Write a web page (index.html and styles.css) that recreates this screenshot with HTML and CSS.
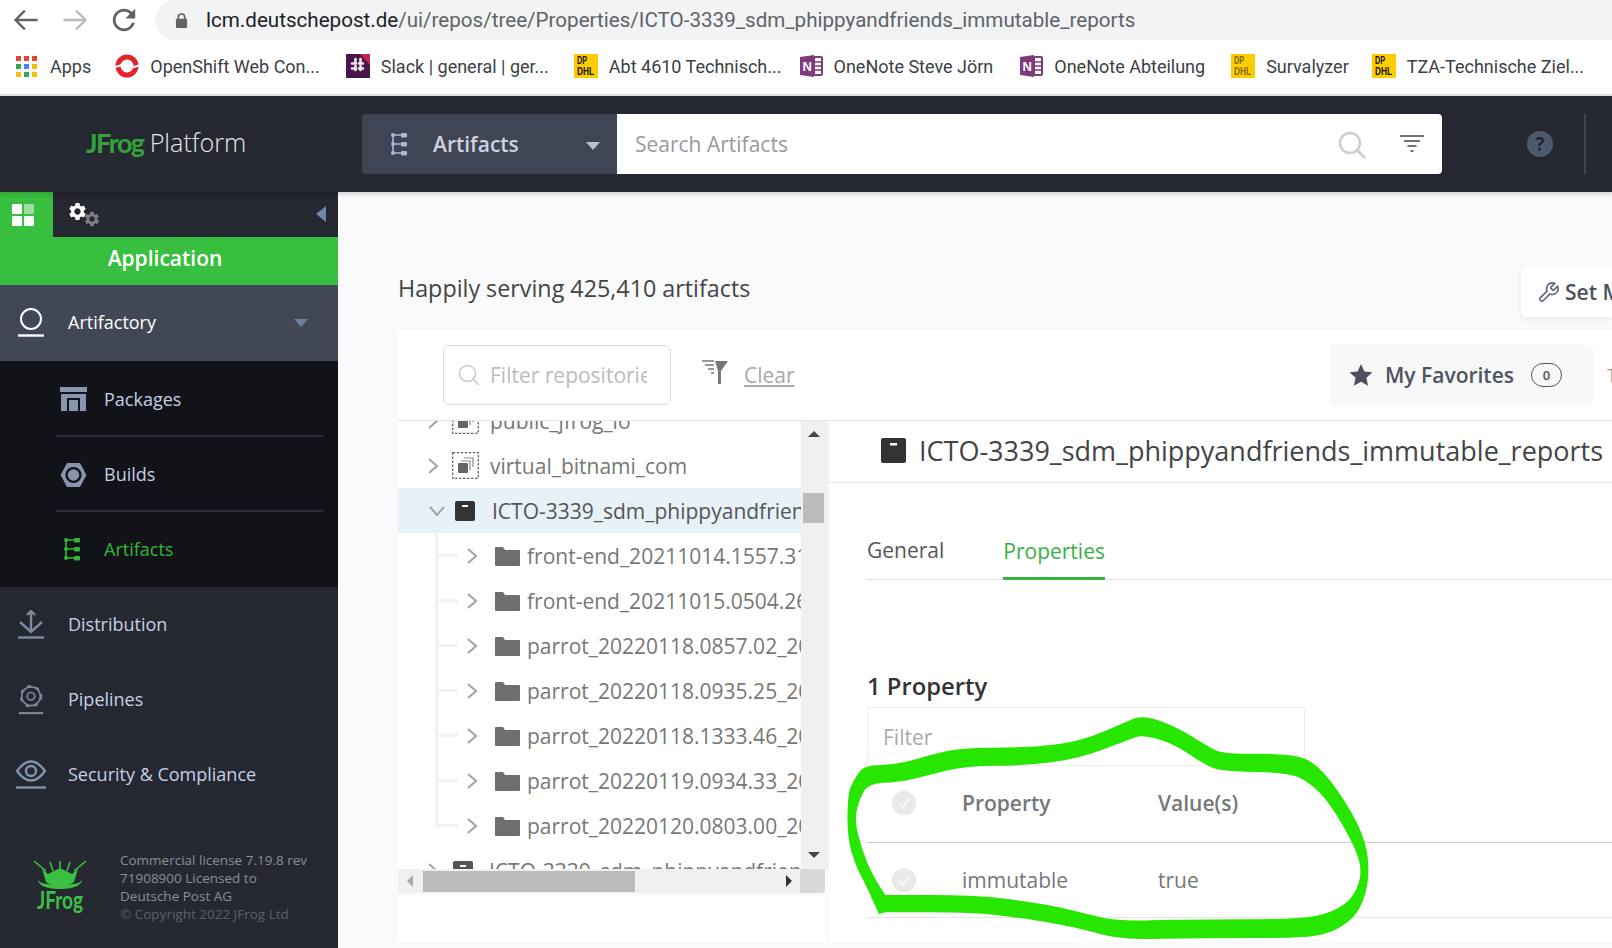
FILE: index.html
```html
<!DOCTYPE html>
<html lang="en">
<head>
<meta charset="utf-8">
<title>JFrog Platform</title>
<link rel="stylesheet" href="styles.css">
</head>
<body>
<svg class="sprite" aria-hidden="true">
  <symbol id="gear" viewBox="0 0 24 24"><path d="M19.14 12.94c.04-.3.06-.61.06-.94 0-.32-.02-.64-.07-.94l2.03-1.58a.49.49 0 0 0 .12-.61l-1.92-3.32a.488.488 0 0 0-.59-.22l-2.39.96c-.5-.38-1.03-.7-1.62-.94l-.36-2.54a.484.484 0 0 0-.48-.41h-3.84c-.24 0-.43.17-.47.41l-.36 2.54c-.59.24-1.13.57-1.62.94l-2.39-.96c-.22-.08-.47 0-.59.22L2.74 8.87c-.12.21-.08.47.12.61l2.03 1.58c-.05.3-.09.63-.09.94s.02.64.07.94l-2.03 1.58a.49.49 0 0 0-.12.61l1.92 3.32c.12.22.37.29.59.22l2.39-.96c.5.38 1.03.7 1.62.94l.36 2.54c.05.24.24.41.48.41h3.84c.24 0 .44-.17.47-.41l.36-2.54c.59-.24 1.13-.56 1.62-.94l2.39.96c.22.08.47 0 .59-.22l1.92-3.32c.12-.22.07-.47-.12-.61l-2.01-1.58zM12 15.6c-1.98 0-3.6-1.62-3.6-3.6s1.62-3.6 3.6-3.6 3.6 1.62 3.6 3.6-1.62 3.6-3.6 3.6z"/></symbol>
  <symbol id="folder" viewBox="0 0 25 20"><path d="M0 2a1 1 0 0 1 1-1h7l2 3h14a1 1 0 0 1 1 1v14a1 1 0 0 1-1 1H1a1 1 0 0 1-1-1z"/></symbol>
  <symbol id="chev" viewBox="0 0 12 18"><path d="M2 2l8 7-8 7" fill="none" stroke="#a3a3a3" stroke-width="2"/></symbol>
  <symbol id="tree" viewBox="0 0 18 24"><g fill="currentColor"><rect x="11" y="1" width="6" height="4.5" rx="1"/><rect x="11" y="10" width="6" height="4.5" rx="1"/><rect x="11" y="19" width="6" height="4.5" rx="1"/><circle cx="3" cy="3" r="2"/><circle cx="3" cy="12" r="2"/><circle cx="3" cy="21" r="2"/></g><path d="M3 3v18M3 3h8M3 12h8M3 21h8" stroke="currentColor" stroke-width="1.6" fill="none"/></symbol>
  <symbol id="check" viewBox="0 0 24 24"><circle cx="12" cy="12" r="12" fill="#e9e9e9"/><path d="M7 12.5l3.6 4L17 8" fill="none" stroke="#fff" stroke-width="1.3"/></symbol>
</svg>

<div class="page">
  <div class="browser-bar">
    <div class="nav-icons">
      <svg class="nav-icon" viewBox="0 0 24 24"><path d="M22 12H3M11 4l-8 8 8 8" fill="none" stroke="#5f6368" stroke-width="2"/></svg>
      <svg class="nav-icon" viewBox="0 0 24 24"><path d="M2 12h19M13 4l8 8-8 8" fill="none" stroke="#b9bbbe" stroke-width="2"/></svg>
      <svg class="nav-icon" viewBox="2 2 20 20"><path fill="#5f6368" d="M17.65 6.35A7.958 7.958 0 0 0 12 4c-4.42 0-7.99 3.58-7.99 8s3.57 8 7.99 8c3.73 0 6.84-2.55 7.73-6h-2.08A5.99 5.99 0 0 1 12 18c-3.31 0-6-2.69-6-6s2.69-6 6-6c1.66 0 3.14.69 4.22 1.78L13 11h7V4l-2.35 2.35z"/></svg>
    </div>
    <div class="omnibox">
      <svg class="lock" viewBox="0 0 14 18"><path d="M3.5 8V5.5a3.5 3.5 0 0 1 7 0V8" fill="none" stroke="#5f6368" stroke-width="1.8"/><rect x="1" y="7" width="12" height="10" rx="1.2" fill="#5f6368"/></svg>
      <span class="url"><span class="url-host">lcm.deutschepost.de</span>/ui/repos/tree/Properties/ICTO-3339_sdm_phippyandfriends_immutable_reports</span>
    </div>
  </div>

  <div class="bookmarks">
    <div class="bm bm-apps">
      <svg class="bm-icon" viewBox="0 0 21 21"><g>
        <rect class="g-r" x="0" y="0" width="5" height="5"/><rect class="g-r" x="8" y="0" width="5" height="5"/><rect class="g-r" x="16" y="0" width="5" height="5"/>
        <rect class="g-g" x="0" y="8" width="5" height="5"/><rect class="g-b" x="8" y="8" width="5" height="5"/><rect class="g-y" x="16" y="8" width="5" height="5"/>
        <rect class="g-y" x="0" y="16" width="5" height="5"/><rect class="g-g" x="8" y="16" width="5" height="5"/><rect class="g-y" x="16" y="16" width="5" height="5"/></g></svg>
      <span>Apps</span>
    </div>
    <div class="bm bm-openshift">
      <svg class="bm-icon" viewBox="0 0 24 24"><circle cx="12" cy="12" r="9" fill="none" stroke="#e3242b" stroke-width="5"/><path d="M0 13l12-3.500M12 15l12-3.500" stroke="#fff" stroke-width="2"/></svg>
      <span>OpenShift Web Con...</span>
    </div>
    <div class="bm bm-slack">
      <svg class="bm-icon" viewBox="0 0 24 24"><rect width="24" height="24" fill="#4a154b"/><path d="M14 0h10v11z" fill="#c7254e"/><path d="M6 9.5h12M6 14.5h12M9.5 5v14M14.5 5v14" stroke="#efe8ef" stroke-width="2.6" stroke-linecap="round" stroke-dasharray="4 3"/></svg>
      <span>Slack | general | ger...</span>
    </div>
    <div class="bm bm-abt">
      <svg class="bm-icon" viewBox="0 0 24 24"><rect width="24" height="24" fill="#fc0"/><text class="dhl-text" x="3" y="10" textLength="10" lengthAdjust="spacingAndGlyphs">DP</text><text class="dhl-text" x="3" y="21" textLength="17" lengthAdjust="spacingAndGlyphs">DHL</text></svg>
      <span>Abt 4610 Technisch...</span>
    </div>
    <div class="bm">
      <svg class="bm-icon" viewBox="0 0 24 24"><path d="M1 3l14-2v22L1 21z" fill="#80397b"/><rect x="15" y="3" width="8" height="18" rx="1" fill="none" stroke="#80397b" stroke-width="2"/><path d="M15 8h8M15 12h8M15 16h8" stroke="#80397b" stroke-width="1.6"/><text class="one-text" x="3.5" y="16.5">N</text></svg>
      <span>OneNote Steve Jörn</span>
    </div>
    <div class="bm bm-one2">
      <svg class="bm-icon" viewBox="0 0 24 24"><path d="M1 3l14-2v22L1 21z" fill="#80397b"/><rect x="15" y="3" width="8" height="18" rx="1" fill="none" stroke="#80397b" stroke-width="2"/><path d="M15 8h8M15 12h8M15 16h8" stroke="#80397b" stroke-width="1.6"/><text class="one-text" x="3.5" y="16.5">N</text></svg>
      <span>OneNote Abteilung</span>
    </div>
    <div class="bm bm-surv">
      <svg class="bm-icon" viewBox="0 0 24 24"><rect width="24" height="24" fill="#fc0"/><text class="dhl-text dhl-pale" x="3" y="10" textLength="10" lengthAdjust="spacingAndGlyphs">DP</text><text class="dhl-text dhl-pale" x="3" y="21" textLength="17" lengthAdjust="spacingAndGlyphs">DHL</text></svg>
      <span>Survalyzer</span>
    </div>
    <div class="bm bm-tza">
      <svg class="bm-icon" viewBox="0 0 24 24"><rect width="24" height="24" fill="#fc0"/><text class="dhl-text" x="3" y="10" textLength="10" lengthAdjust="spacingAndGlyphs">DP</text><text class="dhl-text" x="3" y="21" textLength="17" lengthAdjust="spacingAndGlyphs">DHL</text></svg>
      <span>TZA-Technische Ziel...</span>
    </div>
  </div>

  <header class="app-header">
    <div class="brand"><span class="brand-jfrog">JFrog</span> <span class="brand-platform">Platform</span></div>
    <div class="search-group">
      <div class="scope">
        <svg class="scope-icon" viewBox="0 0 18 24"><use href="#tree"/></svg>
        <span class="scope-label">Artifacts</span>
        <span class="caret caret-scope"></span>
      </div>
      <div class="search-box">
        <span class="search-placeholder">Search Artifacts</span>
        <svg class="search-icon" viewBox="0 0 28 28"><circle cx="12" cy="12" r="10" fill="none" stroke="#cfcfcf" stroke-width="2.6"/><path d="M19 19l8 8" stroke="#cfcfcf" stroke-width="3"/></svg>
        <svg class="filter-icon" viewBox="0 0 24 18"><path d="M0 2h24M4 7h16M7.500 12h9M10.500 17h3" stroke="#444" stroke-width="1.700"/></svg>
      </div>
    </div>
    <div class="help">?</div>
    <div class="header-divider"></div>
  </header>

  <div class="app-body">
    <aside class="sidebar">
      <div class="side-tabs">
        <div class="side-tab-active">
          <svg class="grid-icon" viewBox="0 0 22 22"><rect width="10" height="10" rx="1" fill="#fff"/><rect x="12" width="10" height="10" rx="1" fill="#fff" opacity=".5"/><rect y="12" width="10" height="10" rx="1" fill="#fff"/><rect x="12" y="12" width="10" height="10" rx="1" fill="#fff"/></svg>
        </div>
        <div class="side-gears">
          <svg class="gear-a" viewBox="0 0 24 24" fill="#fff"><use href="#gear"/></svg>
          <svg class="gear-b" viewBox="0 0 24 24" fill="#7d7f85"><use href="#gear"/></svg>
        </div>
        <span class="collapse"></span>
      </div>
      <div class="side-app">Application</div>
      <div class="side-row side-row-open">
        <svg class="side-icon" viewBox="0 0 26 30"><circle cx="13" cy="11" r="10" fill="none" stroke="#fff" stroke-width="2"/><path d="M0 27.500h26" stroke="#fff" stroke-width="2.400"/></svg>
        <span class="side-label side-label-white">Artifactory</span>
        <span class="caret caret-side"></span>
      </div>
      <div class="side-sub">
        <div class="sub-row sub-row-a">
          <svg class="sub-icon" viewBox="0 0 27 24"><path d="M0 0h27v5H0z" fill="#8896ad"/><path d="M1 7h25v17h-6V11H7v13H1z" fill="#8896ad"/><path d="M9 13h9v11H9z" fill="#8896ad"/></svg>
          <span class="side-label">Packages</span>
        </div>
        <div class="sub-row">
          <svg class="sub-icon" viewBox="0 0 28 26"><path d="M7 0h14l7 13-7 13H7L0 13z" fill="#8896ad"/><circle cx="14" cy="13" r="7.500" fill="#8896ad" stroke="#111319" stroke-width="2.600"/></svg>
          <span class="side-label">Builds</span>
        </div>
        <div class="sub-row sub-row-last">
          <svg class="sub-icon sub-icon-tree" viewBox="0 0 18 24"><use href="#tree"/></svg>
          <span class="side-label side-label-green">Artifacts</span>
        </div>
      </div>
      <div class="side-row">
        <svg class="side-icon" viewBox="0 0 26 30"><path d="M13 1v21M9 5l4-4 4 4M2 12l11 10 11-10" fill="none" stroke="#7a8ba3" stroke-width="2.400"/><path d="M0 27.500h26" stroke="#7a8ba3" stroke-width="2.400"/></svg>
        <span class="side-label">Distribution</span>
      </div>
      <div class="side-row">
        <svg class="side-icon" viewBox="0 0 26 32"><circle cx="13" cy="12" r="10" fill="none" stroke="#7a8ba3" stroke-width="1.800"/><circle cx="13" cy="12" r="11" fill="none" stroke="#7a8ba3" stroke-width="2" stroke-dasharray="4 5.500"/><circle cx="13" cy="12" r="4" fill="none" stroke="#7a8ba3" stroke-width="1.800"/><path d="M0 30h26" stroke="#7a8ba3" stroke-width="2.200"/></svg>
        <span class="side-label">Pipelines</span>
      </div>
      <div class="side-row">
        <svg class="side-icon side-icon-wide" viewBox="0 0 30 32"><path d="M1 12C6 5 10 2.500 15 2.500S24 5 29 12c-5 7-9 9.500-14 9.500S6 19 1 12z" fill="none" stroke="#8193ad" stroke-width="2.400"/><circle cx="15" cy="12" r="5" fill="none" stroke="#8193ad" stroke-width="2.400"/><path d="M0 28.500h30" stroke="#8193ad" stroke-width="2.400"/></svg>
        <span class="side-label">Security &amp; Compliance</span>
      </div>
      <div class="side-footer">
        <svg class="frog-logo" viewBox="0 0 56 56">
          <path d="M2 1l12 10M18 2l3 9M28 1v9M38 2l-3 9M54 1L42 11" stroke="#3cc043" stroke-width="1.600"/>
          <path d="M10 9l6 5 6-3 6-3 6 3 6 3 6-5-4 13c-6 5-22 5-28 0z" fill="#3cc043"/>
          <path d="M6 17c-2 6 8 8 22 8s24-2 22-8c2 8-8 12-22 12S4 25 6 17z" fill="#3cc043"/>
          <text class="frog-text" x="5" y="49" textLength="46" lengthAdjust="spacingAndGlyphs">JFrog</text>
        </svg>
        <div class="license">
          <div>Commercial license 7.19.8 rev</div>
          <div>71908900 Licensed to</div>
          <div>Deutsche Post AG</div>
          <div class="license-copy">© Copyright 2022 JFrog Ltd</div>
        </div>
      </div>
    </aside>

    <main class="main">
      <div class="main-top">
        <div class="serving">Happily serving 425,410 artifacts</div>
        <div class="set-me-up">
          <svg class="wrench" viewBox="0 0 24 24"><path d="M14.700 6.300a1 1 0 0 0 0 1.400l1.600 1.600a1 1 0 0 0 1.400 0l3.770-3.770a6 6 0 0 1-7.940 7.940l-6.910 6.910a2.120 2.120 0 0 1-3-3l6.910-6.910a6 6 0 0 1 7.940-7.940l-3.760 3.760z" fill="none" stroke="#5b6577" stroke-width="1.700"/></svg>
          <span>Set Me Up</span>
        </div>
      </div>

      <section class="card">
        <div class="toolbar">
          <div class="repo-filter">
            <svg class="repo-search" viewBox="0 0 22 22"><circle cx="9.500" cy="9.500" r="8" fill="none" stroke="#c5c9cf" stroke-width="1.500"/><path d="M15 15l6 6" stroke="#c5c9cf" stroke-width="1.500"/></svg>
            <span class="repo-placeholder">Filter repositories</span>
          </div>
          <svg class="funnel" viewBox="0 0 26 24"><path d="M0 1h12M3 5h9M6 9h6M9 13h3" stroke="#777" stroke-width="1.300"/><path d="M13 1h13l-7 10v13h-3V11z" fill="#777"/></svg>
          <span class="clear">Clear</span>
          <div class="favorites">
            <svg class="star" viewBox="0 0 24 24"><path d="M12 1l3.400 7.400 8 .9-6 5.400 1.700 8L12 18.700 4.900 22.700l1.700-8-6-5.400 8-.9z" fill="#4c4f5e"/></svg>
            <span class="fav-label">My Favorites</span>
            <span class="fav-badge">0</span>
          </div>
          <span class="toolbar-next">T</span>
        </div>

        <div class="split">
          <div class="tree-col">
            <div class="tree-area">
              <div class="tree">
                <div class="t-row t-first">
                  <svg class="t-chev" viewBox="0 0 12 18"><use href="#chev"/></svg>
                  <svg class="t-virtual" viewBox="0 0 27 27"><rect x=".7" y=".7" width="25.600" height="25.600" fill="none" stroke="#666" stroke-width="1.300" stroke-dasharray="2.500 1.500"/><rect x="6" y="11" width="10" height="10" rx="1" fill="#666"/><path d="M9 9h9v9M12 6h9v9" fill="none" stroke="#888" stroke-width="1.200"/></svg>
                  <span class="t-name">public_jfrog_io</span>
                </div>
                <div class="t-row">
                  <svg class="t-chev" viewBox="0 0 12 18"><use href="#chev"/></svg>
                  <svg class="t-virtual" viewBox="0 0 27 27"><rect x=".7" y=".7" width="25.600" height="25.600" fill="none" stroke="#666" stroke-width="1.300" stroke-dasharray="2.500 1.500"/><rect x="6" y="11" width="10" height="10" rx="1" fill="#666"/><path d="M9 9h9v9M12 6h9v9" fill="none" stroke="#888" stroke-width="1.200"/></svg>
                  <span class="t-name">virtual_bitnami_com</span>
                </div>
                <div class="t-row t-selected">
                  <svg class="t-chev-down" viewBox="0 0 18 12"><path d="M2 2l7 8 7-8" fill="none" stroke="#a3a3a3" stroke-width="2"/></svg>
                  <svg class="t-repo" viewBox="0 0 20 20"><rect width="20" height="20" rx="2" fill="#333"/><rect x="7" y="4" width="6" height="2" fill="#fff"/></svg>
                  <span class="t-name">ICTO-3339_sdm_phippyandfriends_immutable_reports</span>
                </div>
                <div class="t-row t-child"><svg class="t-chev" viewBox="0 0 12 18"><use href="#chev"/></svg><svg class="t-folder" viewBox="0 0 25 20"><use href="#folder"/></svg><span class="t-name">front-end_20211014.1557.31_2021</span></div>
                <div class="t-row t-child"><svg class="t-chev" viewBox="0 0 12 18"><use href="#chev"/></svg><svg class="t-folder" viewBox="0 0 25 20"><use href="#folder"/></svg><span class="t-name">front-end_20211015.0504.26_2021</span></div>
                <div class="t-row t-child"><svg class="t-chev" viewBox="0 0 12 18"><use href="#chev"/></svg><svg class="t-folder" viewBox="0 0 25 20"><use href="#folder"/></svg><span class="t-name">parrot_20220118.0857.02_20220118</span></div>
                <div class="t-row t-child"><svg class="t-chev" viewBox="0 0 12 18"><use href="#chev"/></svg><svg class="t-folder" viewBox="0 0 25 20"><use href="#folder"/></svg><span class="t-name">parrot_20220118.0935.25_20220118</span></div>
                <div class="t-row t-child"><svg class="t-chev" viewBox="0 0 12 18"><use href="#chev"/></svg><svg class="t-folder" viewBox="0 0 25 20"><use href="#folder"/></svg><span class="t-name">parrot_20220118.1333.46_20220118</span></div>
                <div class="t-row t-child"><svg class="t-chev" viewBox="0 0 12 18"><use href="#chev"/></svg><svg class="t-folder" viewBox="0 0 25 20"><use href="#folder"/></svg><span class="t-name">parrot_20220119.0934.33_20220119</span></div>
                <div class="t-row t-child t-child-last"><svg class="t-chev" viewBox="0 0 12 18"><use href="#chev"/></svg><svg class="t-folder" viewBox="0 0 25 20"><use href="#folder"/></svg><span class="t-name">parrot_20220120.0803.00_20220120</span></div>
                <div class="t-row">
                  <svg class="t-chev" viewBox="0 0 12 18"><use href="#chev"/></svg>
                  <svg class="t-repo t-repo-next" viewBox="0 0 20 20"><rect width="20" height="20" rx="2" fill="#555"/><rect x="7" y="4" width="6" height="2" fill="#fff"/></svg>
                  <span class="t-name">ICTO-3339_sdm_phippyandfriends_immutable</span>
                </div>
              </div>
              <div class="v-scroll">
                <span class="arrow-up"></span>
                <span class="v-thumb"></span>
                <span class="arrow-down"></span>
              </div>
            </div>
            <div class="h-scroll">
              <span class="arrow-left"></span>
              <span class="h-thumb"></span>
              <span class="arrow-right"></span>
              <span class="h-corner"></span>
            </div>
            <div class="tree-foot"></div>
          </div>

          <div class="detail">
            <div class="detail-title">
              <svg class="detail-icon" viewBox="0 0 25 25"><rect width="25" height="25" rx="2" fill="#333"/><rect x="9" y="5" width="7" height="2.500" fill="#fff"/></svg>
              <span>ICTO-3339_sdm_phippyandfriends_immutable_reports</span>
            </div>
            <div class="detail-body">
              <div class="tabs">
                <span class="tab">General</span>
                <span class="tab tab-active">Properties</span>
              </div>
              <h2 class="prop-count">1 Property</h2>
              <div class="prop-filter">Filter</div>
              <div class="prop-row prop-head">
                <svg class="prop-check" viewBox="0 0 24 24"><use href="#check"/></svg>
                <span>Property</span>
                <span>Value(s)</span>
              </div>
              <div class="prop-row">
                <svg class="prop-check" viewBox="0 0 24 24"><use href="#check"/></svg>
                <span>immutable</span>
                <span>true</span>
              </div>
            </div>
          </div>
        </div>
      </section>
    </main>
  </div>

  <svg class="scribble" viewBox="0 0 1568 864" preserveAspectRatio="none" aria-hidden="true">
    <path fill="#27e600" fill-rule="evenodd" d="M137 762 L155 757 L278 757 Q400 757 480 767 Q560 778 620 789 Q680 800 740 817 Q800 840 900 837 Q1000 834 1170 834 Q1340 836 1380 823 Q1420 812 1452 784 Q1485 757 1500 697 Q1513 640 1504 580 Q1495 520 1457 452 Q1420 385 1385 342 Q1350 300 1315 291 Q1280 281 1190 281 Q1100 283 1080 271 Q1060 260 1010 227 Q960 195 917 180 Q875 166 850 176 Q830 185 765 215 Q700 245 625 254 Q550 263 460 263 Q370 263 325 274 Q280 285 235 299 Q190 313 145 315 Q95 315 82 336 Q66 360 58 380 Q50 400 49 465 Q48 530 60 575 Q73 620 88 650 Q103 680 137 762 Z M155 705 L278 705 Q400 705 480 715 Q560 725 620 737 Q680 750 740 767 Q800 785 900 781 Q1000 778 1170 778 Q1340 778 1385 761 Q1430 745 1451 722 Q1472 700 1481 667 Q1490 635 1480 597 Q1470 560 1435 495 Q1400 430 1370 397 Q1340 365 1310 351 Q1280 337 1190 336 Q1100 335 1075 325 Q1050 315 1005 282 Q960 250 917 237 Q875 225 857 231 Q840 238 770 266 Q700 295 625 306 Q550 317 465 317 Q380 317 330 331 Q280 345 235 356 Q190 367 150 368 Q110 370 97 390 Q85 410 76 445 Q68 480 79 525 Q90 570 105 610 Q120 650 155 705 Z"/>
  </svg>
</div>
</body>
</html>
```
FILE: styles.css
```css
* { box-sizing: border-box; }
html, body { margin: 0; padding: 0; }
body { font-family: "Open Sans", "Noto Sans", sans-serif; background: #fff; color: #333; }
.sprite { display: none; }
.page { position: relative; width: 1612px; height: 948px; overflow: hidden; display: flex; flex-direction: column; }

/* browser chrome */
.browser-bar { height: 40px; display: flex; background: #fff; flex: none; }
.nav-icons { width: 155px; display: flex; gap: 21px; padding-left: 12px; align-items: center; flex: none; }
.nav-icon { width: 28px; height: 28px; flex: none; }
.omnibox { flex: 1; background: #f1f3f4; border-radius: 20px 0 0 20px; display: flex; align-items: center; padding-left: 20px; }
.lock { width: 13px; height: 17px; flex: none; }
.url { margin-left: 18px; font-family: "Roboto", sans-serif; font-size: 20.6px; color: #5f6368; white-space: nowrap; }
.url-host { color: #202124; }
.bookmarks { height: 54px; flex: none; display: flex; align-items: center; gap: 17px; padding: 0 0 2px 16px; background: #fff; font-family: "Roboto", sans-serif; font-size: 18px; color: #3c4043; white-space: nowrap; }
.bm { display: flex; align-items: center; flex: none; }
.bm-icon { width: 24px; height: 24px; flex: none; margin-right: 11px; }
.bm-apps .bm-icon { width: 21px; height: 21px; margin-right: 13px; }
.bm-openshift { margin-left: 7px; }
.bm-slack { margin-left: 9px; }
.bm-abt { margin-left: 8px; }
.bm-one2 { margin-left: 9px; }
.bm-surv { margin-left: 9px; }
.bm-tza { margin-left: 6px; }
.g-r { fill: #ea4335; } .g-g { fill: #34a853; } .g-b { fill: #4285f4; } .g-y { fill: #fbbc05; }
.dhl-text { font-family: "Liberation Sans", sans-serif; font-weight: 700; font-size: 10.5px; fill: #111; }
.dhl-pale { fill: #7c6a10; }
.one-text { font-family: "Liberation Sans", sans-serif; font-weight: 700; font-size: 13px; fill: #fff; }

/* app header */
.app-header { height: 98px; flex: none; border-top: 2px solid #dfe1e4; background: #252830; display: flex; align-items: flex-start; padding-top: 18px; box-shadow: 0 2px 5px rgba(0,0,0,.18); position: relative; z-index: 2; }
.brand { width: 362px; flex: none; height: 60px; display: flex; align-items: center; padding-left: 86px; gap: 6px; margin-top: -2px; }
.brand-jfrog { font-family: "Lato", sans-serif; font-weight: 700; color: #36a23c; font-size: 27px; letter-spacing: -1.5px; }
.brand-platform { color: #e6e8ea; font-weight: 300; font-size: 25.2px; }
.search-group { width: 1080px; height: 60px; display: flex; flex: none; }
.scope { width: 255px; background: #3f4555; border-radius: 4px 0 0 4px; display: flex; align-items: center; padding-left: 28px; }
.scope-icon { width: 18px; height: 24px; color: #a5bbdc; flex: none; }
.scope-label { margin-left: 25px; font-size: 21px; font-weight: 600; color: #cbd3e0; }
.caret { display: inline-block; width: 0; height: 0; border-left: 7px solid transparent; border-right: 7px solid transparent; border-top: 8px solid #b4c2d8; }
.caret-scope { margin-left: 67px; margin-top: 4px; }
.search-box { flex: 1; background: #fff; border-radius: 0 4px 4px 0; display: flex; align-items: center; padding-left: 18px; }
.search-placeholder { flex: 1; font-size: 21px; color: #9a9a9a; }
.search-icon { width: 28px; height: 28px; flex: none; margin-top: 2px; }
.filter-icon { width: 24px; height: 18px; flex: none; margin: -3px 18px 0 34px; }
.help { width: 26px; height: 26px; border-radius: 50%; background: #4d5a6e; color: #252830; font-weight: 700; font-size: 19px; line-height: 26px; text-align: center; margin: 17px 0 0 85px; flex: none; }
.header-divider { width: 2px; height: 60px; background: #3f4555; margin-left: 31px; flex: none; }

/* layout */
.app-body { flex: 1; display: flex; min-height: 0; }
.sidebar { width: 338px; flex: none; background: #252830; display: flex; flex-direction: column; }
.side-tabs { height: 45px; display: flex; align-items: center; flex: none; }
.side-tab-active { width: 53px; height: 45px; background: #39bf40; display: flex; align-items: center; padding-left: 12px; }
.grid-icon { width: 22px; height: 22px; }
.side-gears { flex: 1; align-self: stretch; position: relative; }
.gear-a { position: absolute; left: 14px; top: 9px; width: 21px; height: 21px; }
.gear-b { position: absolute; left: 30px; top: 18px; width: 18px; height: 18px; }
.collapse { width: 0; height: 0; border-top: 8px solid transparent; border-bottom: 8px solid transparent; border-right: 10px solid #6c87aa; margin-right: 12px; margin-top: -2px; }
.side-app { height: 48px; flex: none; background: #39bf40; color: #fff; font-size: 21px; font-weight: 600; display: flex; align-items: center; justify-content: center; padding: 0 8px 6px 0; }
.side-row { height: 75px; flex: none; display: flex; align-items: center; padding-left: 18px; }
.side-row-open { height: 76px; background: #424757; }
.side-icon { width: 26px; height: 30px; flex: none; margin-right: 24px; }
.side-icon-wide { width: 30px; height: 32px; margin-left: -2px; margin-right: 22px; }
.side-label { font-size: 18px; color: #c5d0e5; white-space: nowrap; padding-bottom: 1px; }
.side-label-white { color: #fff; padding-bottom: 2px; }
.side-label-green { color: #2fb835; }
.caret-side { border-top-color: #6c7f9c; margin-left: auto; margin-right: 30px; margin-top: 0; }
.side-sub { height: 226px; flex: none; background: #111319; padding: 0 15px 0 56px; }
.sub-row { height: 75px; display: flex; align-items: center; border-bottom: 2px solid #2b2e37; padding-top: 2px; }
.sub-row-a { height: 76px; }
.sub-row-last { height: 74px; border-bottom: 0; padding-top: 0; }
.sub-icon { width: 27px; height: 24px; flex: none; margin: 0 17px 0 4px; }
.sub-icon-tree { width: 18px; color: #2fb835; margin: 0 23px 0 7px; }
.side-footer { display: flex; padding: 39px 0 0 32px; }
.frog-logo { width: 56px; height: 56px; flex: none; margin-right: 32px; margin-top: 9px; }
.frog-text { font-family: "Lato", "Liberation Sans", sans-serif; font-weight: 700; font-size: 25px; fill: #3cc043; }
.license { font-size: 13.5px; line-height: 18px; color: #8a8f9a; white-space: nowrap; }
.license-copy { color: #5d616b; }

/* main */
.main { flex: 1; min-width: 0; background: #f9fafb; display: flex; flex-direction: column; padding: 75px 0 6px 60px; }
.main-top { height: 50px; flex: none; display: flex; align-items: center; margin-bottom: 13px; }
.serving { flex: 1; font-size: 23.3px; color: #444; padding-bottom: 9px; }
.set-me-up { width: 91px; height: 50px; flex: none; background: #fff; border-radius: 5px 0 0 5px; box-shadow: 0 2px 6px rgba(0,0,0,.08); display: flex; align-items: center; padding-left: 16px; font-size: 21px; font-weight: 600; color: #4b5260; overflow: hidden; white-space: nowrap; }
.wrench { width: 23px; height: 23px; flex: none; margin-right: 5px; }
.card { flex: 1; min-height: 0; background: #fff; display: flex; flex-direction: column; }
.toolbar { height: 91px; flex: none; display: flex; align-items: center; padding: 0 0 1px 45px; border-bottom: 1px solid #e6e6e6; overflow: hidden; }
.repo-filter { width: 228px; height: 60px; flex: none; border: 1px solid #d9dce4; border-radius: 6px; display: flex; align-items: center; padding-left: 14px; overflow: hidden; }
.repo-search { width: 22px; height: 22px; flex: none; margin-right: 10px; }
.repo-placeholder { width: 157px; overflow: hidden; white-space: nowrap; font-size: 21px; color: #b9bcc2; }
.funnel { width: 26px; height: 24px; flex: none; margin: -6px 16px 0 31px; }
.clear { font-size: 21px; color: #a8a8a8; text-decoration: underline; }
.favorites { width: 263px; height: 60px; flex: none; margin-left: auto; background: #f7f8fa; border-radius: 4px; display: flex; align-items: center; padding-left: 19px; }
.star { width: 24px; height: 24px; flex: none; margin-right: 12px; }
.fav-label { font-size: 21px; font-weight: 600; color: #4f5260; }
.fav-badge { width: 31px; height: 24px; border: 1px solid #555; border-radius: 12px; margin-left: 17px; font-size: 13px; font-weight: 600; line-height: 22px; text-align: center; color: #4f5260; }
.toolbar-next { flex: none; margin-left: 14px; width: 5px; overflow: hidden; font-size: 18px; color: #999; }

.split { flex: 1; min-height: 0; display: flex; }
.tree-col { width: 431px; flex: none; display: flex; flex-direction: column; background: #f9fafb; }
.tree-area { height: 448px; flex: none; display: flex; }
.tree { width: 403px; flex: none; overflow: hidden; background: #fff; }
.t-row { position: relative; height: 45px; display: flex; align-items: center; white-space: nowrap; overflow: hidden; font-size: 21px; color: #777; padding-left: 29px; }
.t-first { margin-top: -23px; }
.t-chev { width: 12px; height: 18px; flex: none; }
.t-virtual { width: 27px; height: 27px; flex: none; margin: 0 11px 0 13px; }
.t-name { flex: none; padding-top: 1px; }
.t-selected { background: #e6f2f8; color: #555; padding-left: 30px; }
.t-chev-down { width: 18px; height: 12px; flex: none; }
.t-repo { width: 20px; height: 20px; flex: none; margin: 0 17px 0 9px; }
.t-repo-next { margin: 0 16px 0 14px; }
.t-child { padding-left: 68px; }
.t-child::before { content: ""; position: absolute; left: 37px; top: 0; bottom: 0; width: 20px; border-left: 3px solid #f2f2f2; background: linear-gradient(#f2f2f2, #f2f2f2) no-repeat 0 50% / 100% 3px; }
.t-child-last::before { bottom: 21px; background-position: 0 100%; }
.t-folder { width: 25px; height: 20px; flex: none; margin: 0 7px 0 17px; fill: #6e6e6e; }
.v-scroll { width: 28px; flex: none; background: #f0f0f0; position: relative; display: flex; flex-direction: column; align-items: center; padding-right: 3px; }
.arrow-up { margin-top: 10px; border-left: 6px solid transparent; border-right: 6px solid transparent; border-bottom: 6px solid #444; }
.v-thumb { width: 21px; height: 30px; background: #bbb; margin-top: 56px; }
.arrow-down { margin-top: auto; margin-bottom: 11px; border-left: 6px solid transparent; border-right: 6px solid transparent; border-top: 6px solid #444; }
.h-scroll { width: 427px; height: 24px; flex: none; display: flex; align-items: center; background: #f0f0f0; border-radius: 0 0 4px 4px; }
.arrow-left { margin-left: 9px; border-top: 6px solid transparent; border-bottom: 6px solid transparent; border-right: 6px solid #aaa; }
.h-thumb { width: 212px; height: 21px; background: #bbb; margin-left: 10px; }
.arrow-right { margin-left: 151px; border-top: 6px solid transparent; border-bottom: 6px solid transparent; border-left: 6px solid #333; }
.h-corner { width: 25px; height: 24px; background: #d8d8d8; margin-left: auto; border-radius: 0 0 4px 0; }
.tree-foot { width: 427px; flex: 1; margin-top: 3px; background: #fff; }

.detail { flex: 1; min-width: 0; display: flex; flex-direction: column; background: #fff; }
.detail-title { height: 62px; flex: none; display: flex; align-items: center; padding: 0 0 2px 52px; border-bottom: 1px solid #e6e6e6; font-size: 27px; color: #444; white-space: nowrap; }
.detail-icon { width: 25px; height: 25px; flex: none; margin-right: 13px; }
.detail-body { flex: 1; padding-left: 38px; }
.tabs { height: 97px; display: flex; align-items: flex-end; gap: 59px; border-bottom: 1px solid #e2e2e2; font-size: 21px; color: #555; }
.tab { height: 43px; line-height: 28px; }
.tab-active { color: #39b13f; border-bottom: 3px solid #39b13f; margin-bottom: -1px; }
.prop-count { margin: 90px 0 5px; height: 32px; line-height: 32px; font-size: 23.8px; font-weight: 600; color: #333; }
.prop-filter { width: 438px; height: 59px; border: 1px solid #eee; padding-left: 15px; display: flex; align-items: center; font-size: 21px; color: #aaa; }
.prop-row { height: 75px; display: grid; grid-template-columns: 95px 196px 1fr; align-items: center; border-bottom: 1px solid #e6e6e6; padding-bottom: 1px; font-size: 21px; color: #777; }
.prop-head { height: 77px; border-bottom-color: #ccc; font-weight: 600; padding-bottom: 3px; }
.prop-check { width: 24px; height: 24px; margin-left: 25px; }

/* hand-drawn annotation on top of the screenshot */
.scribble { position: absolute; left: 830px; top: 660px; width: 560px; height: 288px; pointer-events: none; z-index: 5; }
```
